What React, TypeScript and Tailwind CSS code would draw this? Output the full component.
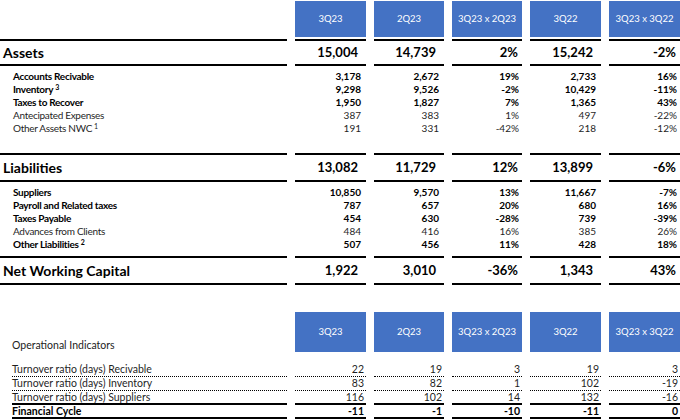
import React from "react";

const COLS = "grid grid-cols-[287px_71px_70px_70px_71px_71px] gap-x-2";
const HEADERS = ["3Q23", "2Q23", "3Q23 x 2Q23", "3Q22", "3Q23 x 3Q22"];

type Item = { label: string; sup?: string; bold: boolean; v: string[] };

const ASSETS: Item[] = [
  { label: "Accounts Recivable", bold: true, v: ["3,178", "2,672", "19%", "2,733", "16%"] },
  { label: "Inventory", sup: "3", bold: true, v: ["9,298", "9,526", "-2%", "10,429", "-11%"] },
  { label: "Taxes to Recover", bold: true, v: ["1,950", "1,827", "7%", "1,365", "43%"] },
  { label: "Antecipated Expenses", bold: false, v: ["387", "383", "1%", "497", "-22%"] },
  { label: "Other Assets NWC", sup: "1", bold: false, v: ["191", "331", "-42%", "218", "-12%"] },
];

const LIABS: Item[] = [
  { label: "Suppliers", bold: true, v: ["10,850", "9,570", "13%", "11,667", "-7%"] },
  { label: "Payroll and Related taxes", bold: true, v: ["787", "657", "20%", "680", "16%"] },
  { label: "Taxes Payable", bold: true, v: ["454", "630", "-28%", "739", "-39%"] },
  { label: "Advances from Clients", bold: false, v: ["484", "416", "16%", "385", "26%"] },
  { label: "Other Liabilities", sup: "2", bold: true, v: ["507", "456", "11%", "428", "18%"] },
];

const OPS = [
  { label: "Turnover ratio (days) Recivable", bold: false, line: "dotted", v: ["22", "19", "3", "19", "3"] },
  { label: "Turnover ratio (days) Inventory", bold: false, line: "dotted", v: ["83", "82", "1", "102", "-19"] },
  { label: "Turnover ratio (days) Suppliers", bold: false, line: "solid", v: ["116", "102", "14", "132", "-16"] },
  { label: "Financial Cycle", bold: true, line: "solid", v: ["-11", "-1", "-10", "-11", "0"] },
];

function HeaderRow({ label, className }: { label?: string; className: string }) {
  return (
    <div className={`${COLS} ${className}`}>
      <div className="pl-[12px] pt-[26px] text-[10.5px] leading-[14px] text-[#222]">{label ?? ""}</div>
      {HEADERS.map((h) => (
        <div key={h} className="flex items-center justify-center bg-[#4472c4] text-[9.5px] text-white">
          {h}
        </div>
      ))}
    </div>
  );
}

function BigRow({ label, v, h }: { label: string; v: string[]; h: string }) {
  return (
    <div className={COLS}>
      <div className={`flex items-center border-y-2 border-black pl-[3px] text-[14px] font-bold text-black ${h}`}>{label}</div>
      {v.map((x, i) => (
        <div
          key={i}
          className={`flex items-center justify-end border-y-2 border-black text-[13px] font-bold text-black ${h} ${
            i === 2 || i === 4 ? "pr-[4px]" : "pr-[8px]"
          }`}
        >
          {x}
        </div>
      ))}
    </div>
  );
}

function Details({ items, className }: { items: Item[]; className: string }) {
  return (
    <div className={className}>
      {items.map((it) => (
        <div key={it.label} className={`${COLS} h-[13px] text-[10px] leading-[13px] ${it.bold ? "font-bold text-black" : "font-normal text-[#1f1f1f]"}`}>
          <div className="pl-[13px] tracking-[-0.3px]">
            {it.label}
            {it.sup && <sup className="ml-[2px] text-[7px]">{it.sup}</sup>}
          </div>
          {it.v.map((x, i) => (
            <div key={i} className={`text-right ${i === 2 || i === 4 ? "pr-[3px]" : "pr-[5px]"}`}>
              {x}
            </div>
          ))}
        </div>
      ))}
    </div>
  );
}

export default function App() {
  return (
    <div className="h-[420px] w-[680px] overflow-hidden bg-white" style={{ fontFamily: "Lato, 'Liberation Sans', sans-serif" }}>
      <HeaderRow className="mt-[1px] h-[36px]" />
      <div className="mt-[2px]">
        <BigRow label="Assets" v={["15,004", "14,739", "2%", "15,242", "-2%"]} h="h-[27px]" />
      </div>
      <Details items={ASSETS} className="pt-[4px] pb-[18px]" />
      <BigRow label="Liabilities" v={["13,082", "11,729", "12%", "13,899", "-6%"]} h="h-[29px]" />
      <Details items={LIABS} className="pt-[4px] pb-[5px]" />
      <BigRow label="Net Working Capital" v={["1,922", "3,010", "-36%", "1,343", "43%"]} h="h-[29px]" />
      <HeaderRow label="Operational Indicators" className="mt-[27px] h-[37px]" />
      <div className="mt-[14px]">
        {OPS.map((r) => {
          const border = r.line === "dotted" ? "border-b border-dotted border-black" : "border-b-2 border-solid border-black";
          return (
            <div key={r.label} className={`${COLS} h-[14px] text-[10.5px] leading-[13px] ${r.bold ? "font-bold text-black" : "text-[#1f1f1f]"}`}>
              <div className="pl-[12px]">
                <div className={`h-[14px] ${border}`}>{r.label}</div>
              </div>
              {r.v.map((x, i) => (
                <div key={i} className={`h-[14px] pr-[2px] text-right ${border}`}>
                  {x}
                </div>
              ))}
            </div>
          );
        })}
      </div>
    </div>
  );
}
